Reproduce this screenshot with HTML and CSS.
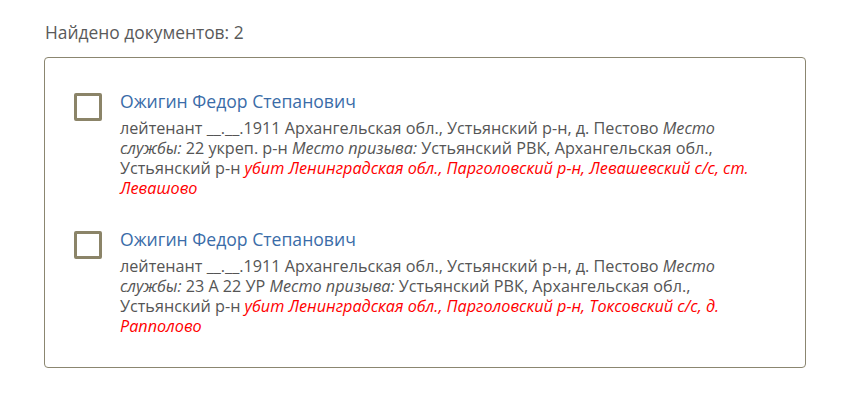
FILE: index.html
```html
<!DOCTYPE html>
<html lang="ru">
<head>
  <meta charset="UTF-8" />
  <meta name="viewport" content="width=device-width, initial-scale=1.0" />
  <title>Результаты поиска</title>
  <link rel="stylesheet" href="styles.css">
</head>
<body>
  <div class="results">
    <p class="found">Найдено документов: 2</p>

    <div class="doc-list">
      <div class="doc">
        <span class="check"></span>
        <div class="doc-info">
          <a class="doc-name" href="#">Ожигин Федор Степанович</a>
          <p class="doc-text">лейтенант __.__.1911 Архангельская обл., Устьянский р-н, д. Пестово <i>Место службы:</i> 22 укреп. р-н <i>Место призыва:</i> Устьянский РВК, Архангельская обл., Устьянский р-н <i class="fate">убит Ленинградская обл., Парголовский р-н, Левашевский с/с, ст. Левашово</i></p>
        </div>
      </div>

      <div class="doc">
        <span class="check"></span>
        <div class="doc-info">
          <a class="doc-name" href="#">Ожигин Федор Степанович</a>
          <p class="doc-text">лейтенант __.__.1911 Архангельская обл., Устьянский р-н, д. Пестово <i>Место службы:</i> 23 А 22 УР <i>Место призыва:</i> Устьянский РВК, Архангельская обл., Устьянский р-н <i class="fate">убит Ленинградская обл., Парголовский р-н, Токсовский с/с, д. Рапполово</i></p>
        </div>
      </div>
    </div>
  </div>
</body>
</html>
```

FILE: styles.css
```css
* {
  box-sizing: border-box;
  margin: 0;
  padding: 0;
}
body {
  background: #fff;
  color: #555;
  font-family: 'Open Sans', sans-serif;
}
.results {
  padding: 21px 55px 0 44px;
}
.found {
  font-size: 17.4px;
  line-height: 22px;
  color: #5a5a5a;
  padding-left: 1px;
  margin-bottom: 14px;
}
.doc-list {
  border: 1px solid #8b8670;
  border-radius: 4px;
  padding: 32px 44px 31px 29px;
  display: flex;
  flex-direction: column;
  gap: 30px;
}
.doc {
  display: flex;
  align-items: flex-start;
  gap: 18px;
}
.check {
  flex: none;
  width: 28px;
  height: 28px;
  margin-top: 3px;
  border: 3px solid #8b8468;
  border-radius: 2px;
}
.doc-name {
  display: block;
  font-size: 17.6px;
  line-height: 22px;
  color: #3a6ca8;
  text-decoration: none;
  margin-bottom: 6px;
}
.doc-text {
  font-size: 16.2px;
  line-height: 20px;
  color: #555;
}
.doc-text i {
  font-style: italic;
}
.doc-text .fate {
  color: #f00;
}
```
